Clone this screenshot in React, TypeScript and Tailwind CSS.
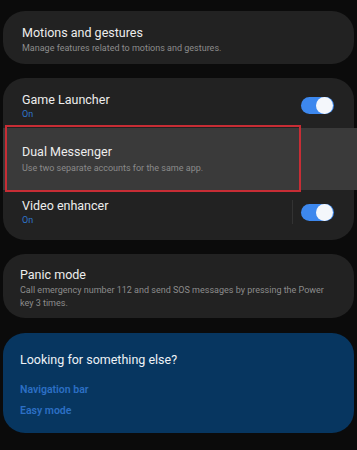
import React from "react";

const Toggle = () => (
  <div className="w-[33px] h-[17px] rounded-full bg-[#3d88ee] relative shrink-0">
    <div className="absolute right-[1px] top-[0px] w-[17px] h-[17px] rounded-full bg-[#f4f7fb]" />
  </div>
);

export default function App() {
  return (
    <div
      className="w-[357px] h-[450px] bg-[#0b0b0b] overflow-hidden flex flex-col pl-[3px] pr-[3px] pt-[11px]"
      style={{ fontFamily: "Roboto, 'Noto Sans', sans-serif" }}
    >
      {/* Card 1 */}
      <div className="h-[53px] rounded-[22px] bg-[#222222] pl-[19px] pt-[14px] flex flex-col">
        <div className="text-[12.5px] leading-[16px] text-[#ededed]">Motions and gestures</div>
        <div className="text-[9px] leading-[12px] text-[#8c8c8c] mt-[1px]">Manage features related to motions and gestures.</div>
      </div>

      {/* Card 2 */}
      <div className="mt-[14px] h-[162px] rounded-[22px] bg-[#222222] flex flex-col relative">
        <div className="h-[50px] flex items-center pl-[19px] pr-[20px]">
          <div className="flex-1 flex flex-col pt-[5px]">
            <div className="text-[12.5px] leading-[16px] text-[#ededed]">Game Launcher</div>
            <div className="text-[9px] leading-[12px] text-[#2f74c8]">On</div>
          </div>
          <div className="pt-[4px]"><Toggle /></div>
        </div>
        <div className="h-[62px] bg-[#3a3a3a] mr-[-3px] pl-[19px] flex flex-col justify-center relative">
          <div className="text-[12.5px] leading-[16px] text-[#ededed]">Dual Messenger</div>
          <div className="text-[9px] leading-[12px] text-[#8a8a8a] mt-[2px]">Use two separate accounts for the same app.</div>
          <div className="absolute left-[2px] top-[-3px] w-[296px] h-[67px] border-2 border-[#c72d35]" />
        </div>
        <div className="flex-1 flex items-center pl-[19px] pr-[20px] pb-[6px]">
          <div className="flex-1 flex flex-col">
            <div className="text-[12.5px] leading-[16px] text-[#ededed]">Video enhancer</div>
            <div className="text-[9px] leading-[12px] text-[#2f74c8]">On</div>
          </div>
          <div className="w-[1px] h-[24px] bg-[#333333] mr-[8px]" />
          <Toggle />
        </div>
      </div>

      {/* Card 3 */}
      <div className="mt-[14px] h-[64px] rounded-[22px] bg-[#222222] pl-[17px] pr-[20px] pt-[13px] flex flex-col">
        <div className="text-[12.5px] leading-[16px] text-[#ededed]">Panic mode</div>
        <div className="text-[9px] leading-[13px] text-[#8c8c8c] mt-[1px]">
          Call emergency number 112 and send SOS messages by pressing the Power key 3 times.
        </div>
      </div>

      {/* Card 4 */}
      <div className="mt-[15px] h-[100px] rounded-[22px] bg-[#073660] pl-[17px] pt-[19px] flex flex-col">
        <div className="text-[12.5px] leading-[16px] text-[#eef2f6]">Looking for something else?</div>
        <div className="text-[10.5px] leading-[13px] font-semibold text-[#2c6fc4] mt-[15px]">Navigation bar</div>
        <div className="text-[10.5px] leading-[13px] font-semibold text-[#2c6fc4] mt-[8px]">Easy mode</div>
      </div>
    </div>
  );
}
